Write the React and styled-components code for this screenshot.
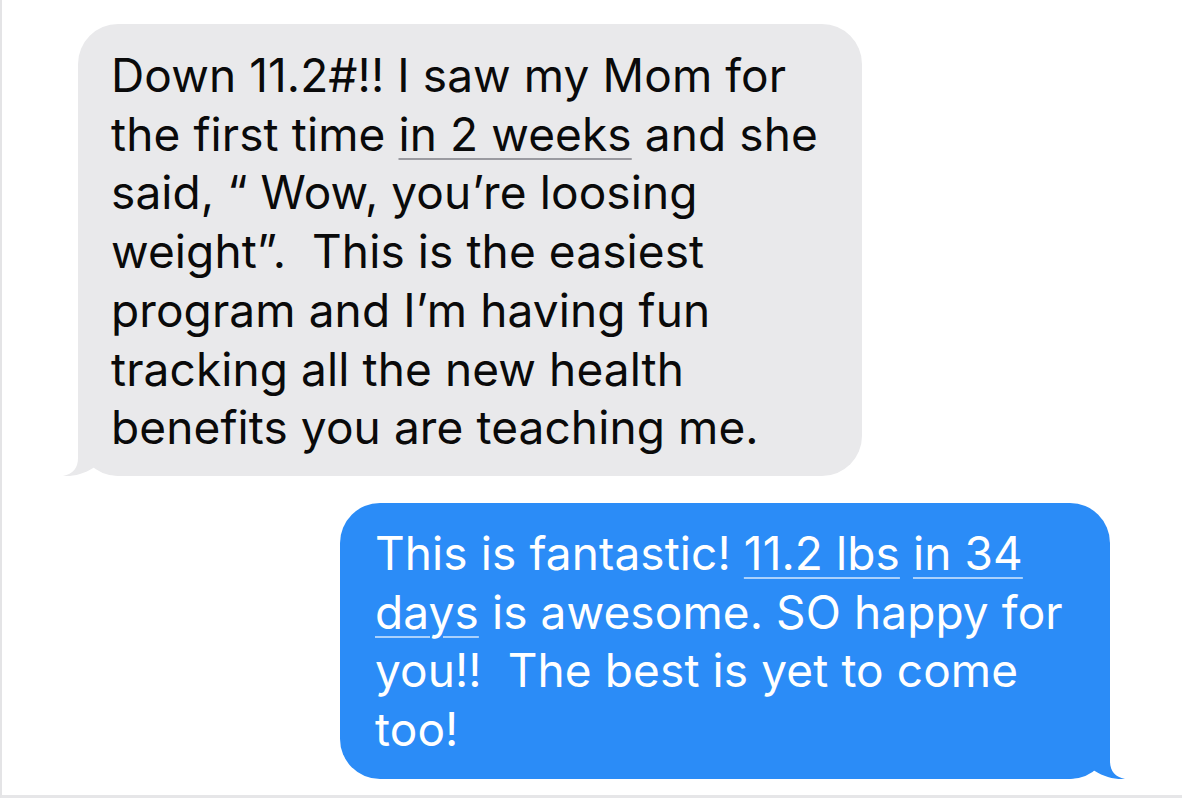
import React from "react";
import styled, { createGlobalStyle } from "styled-components";

const Global = createGlobalStyle`
  html, body { margin: 0; padding: 0; background: #fff; }
  body { font-family: Inter, "Liberation Sans", sans-serif; }
`;

const Page = styled.div`
  width: 1182px;
  height: 798px;
  box-sizing: border-box;
  border-left: 2px solid #e4e4e6;
  border-bottom: 3px solid #e6e6e8;
  background: #fff;
  display: flex;
  flex-direction: column;
  padding-top: 24px;
  gap: 27px;
  overflow: hidden;
`;

const Bubble = styled.div`
  position: relative;
  isolation: isolate;
  box-sizing: border-box;
  width: ${(p) => p.$w}px;
  margin-left: ${(p) => p.$left}px;
  padding: ${(p) => p.$pad};
  border-radius: 40px;
  background: ${(p) => (p.$sent ? "#2b8cf7" : "#e9e9eb")};
  color: ${(p) => (p.$sent ? "#ffffff" : "#0a0a0a")};
  font-family: Inter, "Liberation Sans", sans-serif;
  font-size: 46px;
  line-height: 58.7px;
  letter-spacing: 0.1px;
  white-space: nowrap;
`;

const Link = styled.span`
  text-decoration: underline;
  text-decoration-thickness: 2px;
  text-underline-offset: 7px;
  text-decoration-color: ${(p) => (p.$sent ? "rgba(255,255,255,0.6)" : "#9a9aa0")};
`;

const Tail = styled.svg`
  position: absolute;
  z-index: -1;
  bottom: 0;
  width: 60px;
  height: 40px;
  ${(p) => (p.$sent ? "right: -15px;" : "left: -15px; transform: scaleX(-1);")}
`;

function TailShape({ sent }) {
  return (
    <Tail $sent={sent} viewBox="0 0 60 40" aria-hidden="true">
      <path
        d="M45 0 L45 22 C45 32 50 38 60 40 C50 41 36 37 27 30 C22 35 12 40 0 40 L0 0 Z"
        fill={sent ? "#2b8cf7" : "#e9e9eb"}
      />
    </Tail>
  );
}

export default function App() {
  return (
    <>
      <Global />
      <Page>
        <Bubble $left={76} $w={784} $pad="22px 18px 19px 33px">
          <TailShape />
          Down 11.2#!! I saw my Mom for
          <br />
          the first time <Link>in 2 weeks</Link> and she
          <br />
          said, “ Wow, you’re loosing
          <br />
          weight”.&nbsp; This is the easiest
          <br />
          program and I’m having fun
          <br />
          tracking all the new health
          <br />
          benefits you are teaching me.
        </Bubble>
        <Bubble $sent $left={338} $w={770} $pad="21px 18px 20px 35px">
          <TailShape sent />
          This is fantastic! <Link $sent>11.2 lbs</Link> <Link $sent>in 34</Link>
          <br />
          <Link $sent>days</Link> is awesome. SO happy for
          <br />
          you!!&nbsp; The best is yet to come
          <br />
          too!
        </Bubble>
      </Page>
    </>
  );
}
